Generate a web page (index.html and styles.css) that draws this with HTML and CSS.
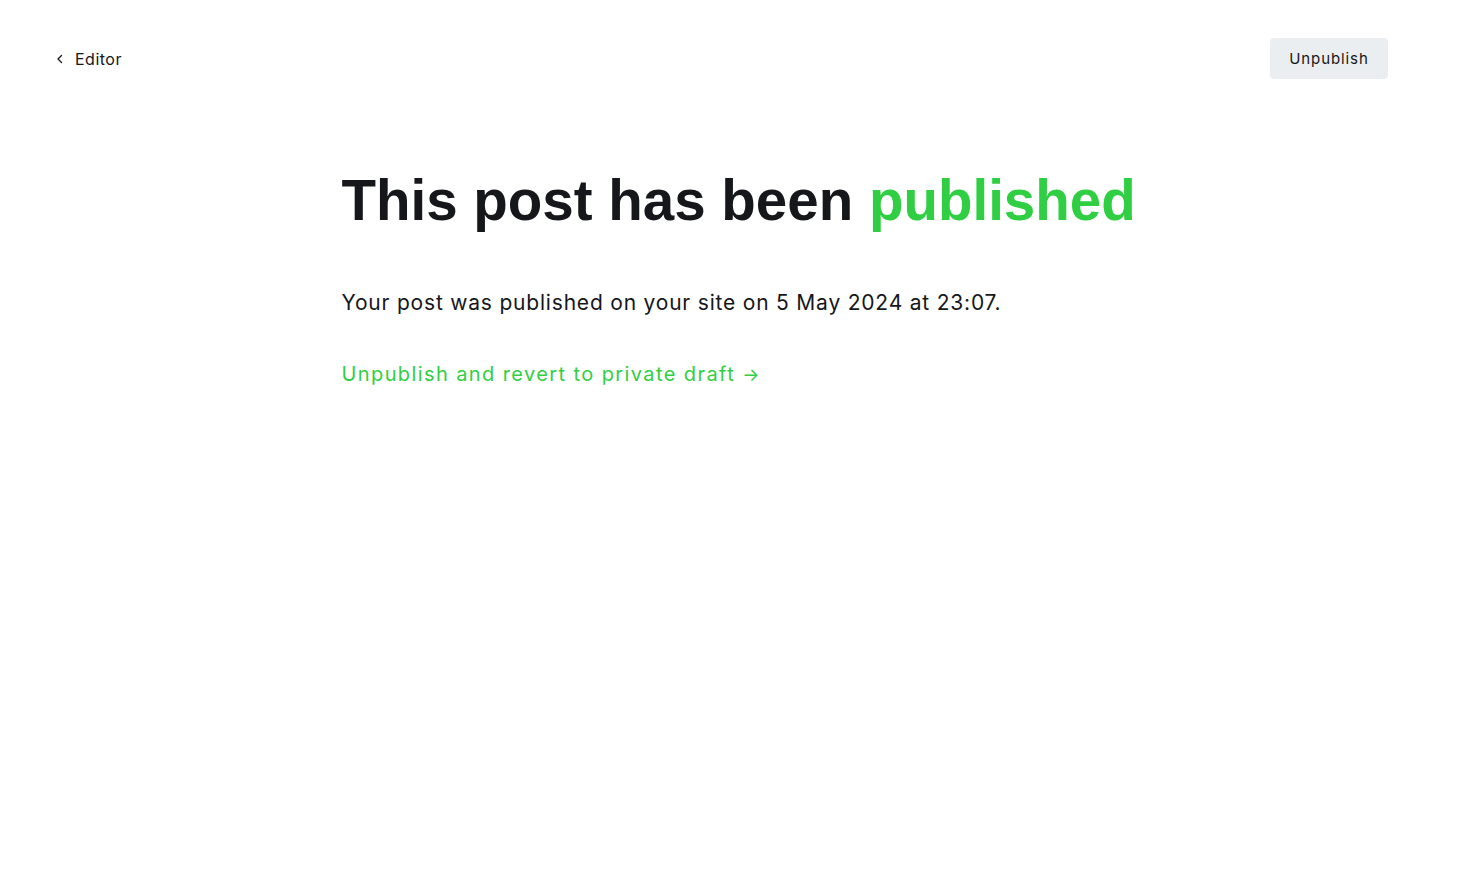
FILE: index.html
```html
<!DOCTYPE html>
<html lang="en">
<head>
<meta charset="utf-8">
<title>Published</title>
<link rel="stylesheet" href="styles.css">
</head>
<body>
<header class="topbar">
  <a class="back" href="#">
    <svg class="chev" width="8" height="10" viewBox="0 0 8 10"><path d="M5.5 1.5 L2 5 L5.5 8.5" fill="none" stroke="#15171a" stroke-width="1.3" stroke-linecap="round" stroke-linejoin="round"/></svg>
    <span>Editor</span>
  </a>
  <button class="btn">Unpublish</button>
</header>
<main class="content">
  <h1 class="title">This post has been <span class="green">published</span></h1>
  <p class="desc">Your post was published on your site on 5 May 2024 at 23:07.</p>
  <a class="link" href="#">Unpublish and revert to private draft <span class="arrow">→</span></a>
</main>
</body>
</html>
```
FILE: styles.css
```css
* { box-sizing: border-box; }
html, body { margin: 0; padding: 0; background: #fff; }
body {
  font-family: Inter, "Noto Sans", sans-serif;
  color: #15171a;
  width: 1483px;
  height: 878px;
}
.topbar {
  display: flex;
  align-items: center;
  justify-content: space-between;
  padding: 38px 95px 0 56px;
  height: 79px;
}
.back {
  display: flex;
  align-items: center;
  gap: 11px;
  text-decoration: none;
  color: #15171a;
  font-size: 16px;
  letter-spacing: 0.5px;
}
.chev { display: block; }
.btn {
  font-family: Inter, sans-serif;
  font-size: 15px;
  letter-spacing: 0.9px;
  color: #15171a;
  background: #ebeef0;
  border: 0;
  border-radius: 4px;
  height: 41px;
  width: 118px;
  padding: 0;
}
.content {
  width: 800px;
  margin: 0 auto;
  padding-top: 91px;
}
.title {
  margin: 0;
  font-family: "Liberation Sans", Arial, sans-serif;
  font-size: 56.5px;
  font-weight: 700;
  letter-spacing: 0;
  line-height: 62px;
  white-space: nowrap;
}
.green { color: #30cf43; }
.desc {
  margin: 56px 0 0;
  font-size: 21px;
  letter-spacing: 0.8px;
  line-height: 1.4;
  color: #15171a;
}
.link {
  display: inline-block;
  margin-top: 43px;
  font-size: 20px;
  letter-spacing: 1.4px;
  line-height: 1.4;
  font-weight: 400;
  color: #30cf43;
  text-decoration: none;
}
.arrow { font-size: 18px; }
```
